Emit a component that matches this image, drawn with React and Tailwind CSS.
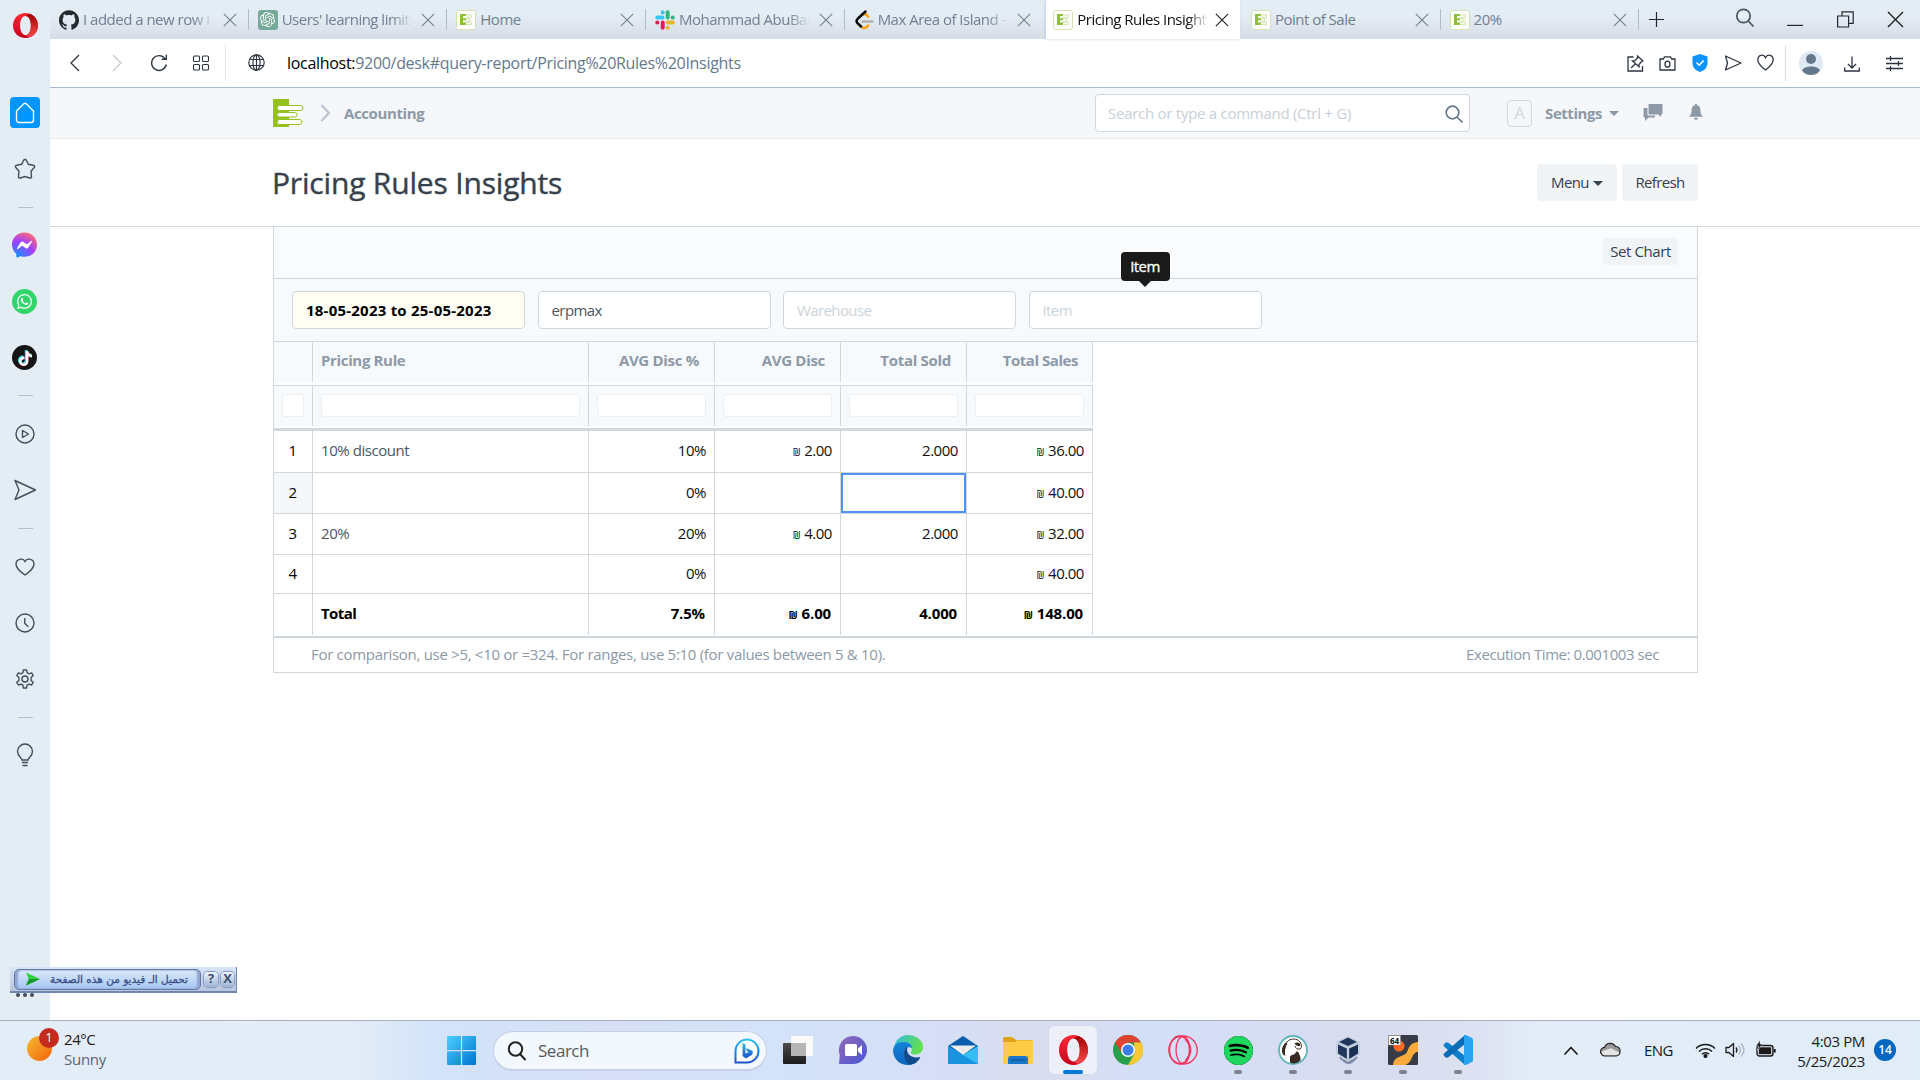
import React from "react";
import { SiGithub, SiOpenai, SiTiktok, SiWhatsapp, SiSpotify } from "react-icons/si";

const Svg = ({ w = 20, h = w, vb = "0 0 20 20", className = "", sw = 1.3, children }) => (
  <svg width={w} height={h} viewBox={vb} className={`shrink-0 ${className}`} fill="none" stroke="currentColor" strokeWidth={sw}>
    {children}
  </svg>
);

const OperaO = ({ w, h }) => (
  <svg width={w} height={h} viewBox="0 0 30 30" preserveAspectRatio="none" className="shrink-0">
    <defs>
      <linearGradient id="opA" x1="0" y1="0" x2="0" y2="1">
        <stop offset="0" stopColor="#ff2a3a" />
        <stop offset="1" stopColor="#c8001c" />
      </linearGradient>
      <linearGradient id="opB" x1="0" y1="0" x2="0" y2="1">
        <stop offset="0" stopColor="#9c0000" />
        <stop offset="1" stopColor="#ff4b4b" />
      </linearGradient>
    </defs>
    <path fillRule="evenodd" fill="url(#opA)" d="M15 0C6.500 0 0 6.500 0 15s6.500 15 15 15c8.500 0 15-6.500 15-15S23.500 0 15 0zM15 3.500c4 0 6.500 5 6.500 11.500S19 26.500 15 26.500 8.500 21.500 8.500 15 11 3.500 15 3.500z" />
    <path fill="url(#opB)" d="M15 3.500C17 1.800 19 1.200 20.500 1.200 26 3.500 30 8.500 30 15s-4 11.500-9.500 13.800C18.500 28.800 17 28.200 15 26.500c4 0 6.500-5 6.500-11.500S19 3.500 15 3.500z" />
  </svg>
);

const ErpFavicon = () => (
  <svg width="20" height="20" viewBox="0 0 20 20" className="shrink-0">
    <rect x=".5" y=".5" width="19" height="19" rx="2" fill="#fdfefb" stroke="#d4e3b5" />
    <path d="M4 4h6v2H7v2.300h3v2H7v2.300h3V15H4z" fill="#8fbe3c" />
    <path d="M9.500 5h6v2.400h-6M9.500 8.600h4.500v2.400H9.500M9.500 12.300h6v2.200h-6" fill="none" stroke="#cfe2a8" strokeWidth=".9" />
  </svg>
);

const ErpLogo = () => (
  <svg width="31" height="28" viewBox="0 0 31 28" className="shrink-0">
    <rect width="16" height="28" fill="#95c11f" />
    <g fill="#fff" stroke="#95c11f" strokeWidth="1">
      <rect x="4" y="6.500" width="26" height="5" rx="2.500" />
      <rect x="4" y="13.500" width="20" height="4.500" rx="2.200" />
      <rect x="4" y="20.500" width="25" height="5" rx="2.500" />
    </g>
  </svg>
);

const Slack = () => (
  <svg width="20" height="20" viewBox="0 0 20 20" className="shrink-0" strokeWidth="4" strokeLinecap="round">
    <path d="M7.700 2.200v.2M2.300 7.600h5.200" stroke="#36c5f0" />
    <path d="M12.700 2.300v5.200M17.800 7.600h-.1" stroke="#2eb67d" />
    <path d="M7.700 17.700v-5.200M2.200 12.600h.1" stroke="#e01e5a" />
    <path d="M12.700 17.800v-.1M12.700 12.600h5.100" stroke="#ecb22e" />
  </svg>
);

const Leet = () => (
  <svg width="20" height="20" viewBox="0 0 20 20" className="shrink-0" fill="none" strokeLinecap="round" strokeWidth="2.500">
    <path d="M7.500 5.200c2-1.500 4-1.300 5.500 0l1.300 1.500M7 16.500c1.700 2 4.200 2 5.700.5l1.500-1.500" stroke="#ffa116" />
    <path d="M11.500 1.500 3.500 9c-1.200 1.300-1.200 2.800 0 4.200L7 16.500" stroke="#070706" />
    <path d="M8.500 11.500h9.700" stroke="#b3b3b3" />
  </svg>
);

const Cross = ({ dark, s = 14 }) => (
  <Svg w={s} vb="0 0 14 14" sw={1.1} className={dark ? "text-[#1b1f24]" : "text-[#75808b]"}>
    <path d="M.8.8l12.400 12.400M13.200.8.8 13.200" />
  </Svg>
);

const tabs = [
  { icon: <SiGithub size={20} color="#24292f" />, t: "I added a new row i" },
  { icon: <div className="flex size-5 items-center justify-center rounded-[3px] bg-[#75a99a]"><SiOpenai size={15} color="#fff" /></div>, t: "Users' learning limit" },
  { icon: <ErpFavicon />, t: "Home" },
  { icon: <Slack />, t: "Mohammad AbuBac" },
  { icon: <Leet />, t: "Max Area of Island -" },
  { icon: <ErpFavicon />, t: "Pricing Rules Insight", active: true },
  { icon: <ErpFavicon />, t: "Point of Sale" },
  { icon: <ErpFavicon />, t: "20%" },
];

function TabBar() {
  return (
    <div className="flex h-[39px] items-stretch bg-gradient-to-b from-[#e4ecf4] from-40% to-[#d6dde6]">
      {tabs.map((x, i) => {
        const line = !x.active && i !== 4;
        return (
          <div
            key={i}
            className={`relative flex w-[198.670px] shrink-0 items-center ${x.active ? "" : "pr-[12px] pl-[9px]"}`}
          >
            <div className={x.active ? "ml-[3px] flex h-full w-[194px] items-center rounded-t-[2px] bg-white pr-[11px] pl-[7px] shadow-[-1px_0_3px_#c0cee4]" : "contents"}>
              {x.icon}
              <div
                className={`mb-[2px] ml-[4px] w-[131px] text-[15px] leading-[22px] tracking-[-0.034em] whitespace-nowrap ${i === 2 || i > 5 ? "" : "[mask-image:linear-gradient(to_right,#000_84%,transparent)]"} ${x.active ? "text-[#111]" : "text-[#6f8093]"}`}
              >
                {x.t}
              </div>
              <div className="ml-auto flex"><Cross dark={x.active} /></div>
            </div>
            {line && <div className="absolute top-[9px] right-0 h-[21px] w-px bg-[#aebccb]" />}
          </div>
        );
      })}
      <div className="flex flex-1 items-center pb-px pl-[10px] text-[#22282f]">
        <Svg w={15} vb="0 0 15 15" sw={1.2}><path d="M7.500 0v15M0 7.500h15" /></Svg>
        <Svg w={20} sw={1.700} className="mt-[-3px] ml-[71px] text-[#4a545f]"><circle cx="8.500" cy="8" r="6.700" /><path d="M13.300 13l5.200 5.500" /></Svg>
        <Svg w={16} h={14} vb="0 0 16 14" sw={1.200} className="ml-[32px]"><path d="M0 13.400h16" /></Svg>
        <Svg w={17} vb="0 0 17 17" sw={1.200} className="ml-[34px]"><path d="M.6 5h11v11H.6zM5 5V.8h11.200v11.500h-4.500" /></Svg>
        <div className="ml-[33px] flex"><Cross dark s={17} /></div>
      </div>
    </div>
  );
}

function AddressBar() {
  return (
    <div className="flex h-[49px] items-center border-b border-[#a9b8ca] bg-white text-[#2c3540]">
      <Svg w={12} h={18} vb="0 0 12 18" className="ml-[19px]"><path d="M10 1 2 9l8 8" /></Svg>
      <Svg w={12} h={18} vb="0 0 12 18" className="ml-[30px] text-[#c3c9d0]"><path d="M2 1l8 8-8 8" /></Svg>
      <Svg w={18} vb="0 0 18 18" className="ml-[27px]" sw={1.400}><path d="M16.300 10.500A7.400 7.400 0 1 1 15 4.600M16.300.8v4.500h-4.600" /></Svg>
      <Svg w={18} vb="0 0 18 18" className="ml-[24px]" sw={1.100}>
        <rect x="1.500" y="2" width="6" height="5.500" rx="1" /><rect x="10.500" y="2" width="6" height="5.500" rx="1" />
        <rect x="1.500" y="10.500" width="6" height="5.500" rx="1" /><rect x="10.500" y="10.500" width="6" height="5.500" rx="1" />
      </Svg>
      <div className="ml-[15px] h-9 w-px bg-[#e3e6ea]" />
      <Svg w={17} vb="0 0 17 17" className="ml-[22px] mb-px" sw={1.200}>
        <circle cx="8.500" cy="8.500" r="7.700" /><ellipse cx="8.500" cy="8.500" rx="3.600" ry="7.700" /><path d="M8.500.8v15.400M1.500 5.500h14M1.500 11.500h14" />
      </Svg>
      <div className="ml-[22px] flex-1 text-[16px] tracking-[-0.019em] text-[#66788c]">
        <span className="text-black">localhost:</span>9200/desk#query-report/Pricing%20Rules%20Insights
      </div>
      <Svg w={17} vb="0 0 17 17"><path d="M6.500 2H1v14h14.500v-5M10.500 1l5.500 5-1.500.5-2.500 3 0 2.200L5.500 6l2.500-.3 2.500-2.700zM8.500 8.700 4 13" /></Svg>
      <Svg w={17} vb="0 0 17 17" className="ml-[15px]"><path d="M1 4h3.500l1-2.200h6l1 2.200H16v11H1z" strokeLinejoin="round" /><ellipse cx="8.500" cy="9.200" rx="2.500" ry="3" /></Svg>
      <svg width="16" height="18" viewBox="0 0 16 18" className="ml-[16px] shrink-0"><path d="M8 0l7.500 2.500V9c0 4.500-3 7.500-7.500 9C3.500 16.500.5 13.500.5 9V2.500z" fill="#0a93ff" /><path d="M4.500 8.500l2.700 2.700 4.500-4.700" fill="none" stroke="#fff" strokeWidth="1.600" /></svg>
      <Svg w={18} vb="0 0 18 18" className="ml-[16px]"><path d="M1.500 2 17 9 1.500 16l2-7z" strokeLinejoin="round" /></Svg>
      <Svg w={17} vb="0 0 17 17" className="mt-[-2px] ml-[15px]"><path d="M8.500 16C4 12.500.8 9.800.8 5.700c0-5 6-6 7.700-2 1.700-4 7.700-3 7.700 2C16.200 9.800 13 12.500 8.500 16z" /></Svg>
      <div className="ml-[11px] h-9 w-px bg-[#d9dee4]" />
      <svg width="24" height="24" viewBox="0 0 24 24" className="ml-[13px] shrink-0"><circle cx="12" cy="12" r="12" fill="#dfe9f3" /><circle cx="12" cy="8" r="5" fill="#65788b" /><path d="M3 19.500C5 14 19 14 21 19.500 17 25.500 7 25.500 3 19.500z" fill="#65788b" /></svg>
      <Svg w={16} vb="0 0 16 16" className="mt-[2px] ml-[21px]" sw={1.300}><path d="M8 .5v11M4 8l4 4 4-4M.7 11.500V15h14.600v-3.500" /></Svg>
      <Svg w={17} vb="0 0 17 17" className="mr-[17px] ml-[26px]" sw={1.300}><path d="M0 3.500h17M0 8.500h17M0 13.500h17M4.500 1v5M12.500 6v5M4.500 11v5" /></Svg>
    </div>
  );
}

function NavBar() {
  return (
    <div className="flex h-[51px] items-center border-b border-[#e8ecf0] bg-[#f5f7fa] pl-[223px] text-[#8d99a6]">
      <ErpLogo />
      <Svg w={11} h={18} vb="0 0 11 18" sw={2.200} className="ml-[16px] text-[#b9c4d0]"><path d="M1.500 1 9 9l-7.500 8" /></Svg>
      <div className="ml-[13px] text-[15px] font-bold tracking-[-0.026em]">Accounting</div>
      <div className="ml-auto flex h-[38px] w-[375px] items-center rounded-[4px] border border-[#d1d8dd] bg-white pr-[6px] pl-[12px] text-[15px] tracking-[-0.018em] text-[#c8d0d8]">
        <span className="flex-1">Search or type a command (Ctrl + G)</span>
        <Svg w={18} vb="0 0 18 18" sw={1.700} className="mt-px text-[#66788a]"><circle cx="7.500" cy="7.500" r="6.300" /><path d="M12 12l5.500 5.500" /></Svg>
      </div>
      <div className="ml-[37px] flex h-[27px] w-[25px] items-center justify-center rounded-[4px] border border-[#d1d8dd] text-[17px] text-[#d1d8dd]">A</div>
      <div className="ml-[13px] text-[15px] font-bold tracking-[-0.030em]">Settings</div>
      <div className="ml-[7px] border-x-[5px] border-t-[5px] border-x-transparent border-t-[#8d99a6]" />
      <svg width="20" height="17" viewBox="0 0 20 17" className="mt-[-2px] ml-[24px] shrink-0" fill="#8d99a6"><path d="M6.500 0h12c.6 0 1 .4 1 1v8.500c0 .6-.4 1-1 1H18V13l-2.800-2.500H6.500c-.6 0-1-.4-1-1V1c0-.6.400-1 1-1z" /><path d="M4.500 4H1.500c-.6 0-1 .4-1 1v7.500c0 .6.400 1 1 1H2V17l3.500-3.500H11c.6 0 1-.4 1-1V11.500H5.500a1 1 0 0 1-1-1z" /></svg>
      <svg width="14" height="16" viewBox="0 0 14 16" className="mt-[-2px] mr-[217px] ml-[26px] shrink-0" fill="#8d99a6"><path d="M7 0c.7 0 1.100.5 1.100 1.200C10.500 1.700 11.500 3.800 11.500 6.500c0 3 .8 4.500 2.500 6.200H0c1.700-1.700 2.500-3.200 2.500-6.200 0-2.700 1-4.800 3.400-5.300C5.900.5 6.300 0 7 0zM5 13.700h4c0 1.200-.9 2.100-2 2.100s-2-.9-2-2.100z" /></svg>
    </div>
  );
}

const colW = ["w-[39px]", "w-[276px]", "w-[126px]", "w-[126px]", "w-[126px]", "w-[126px]"];
const headers = ["", "Pricing Rule", "AVG Disc %", "AVG Disc", "Total Sold", "Total Sales"];
const rows = [
  { h: "h-[41px]", c: ["1", "10% discount", "10%", "₪ 2.00", "2.000", "₪ 36.00"] },
  { h: "h-[40px]", c: ["2", "", "0%", "", "", "₪ 40.00"] },
  { h: "h-[40px]", c: ["3", "20%", "20%", "₪ 4.00", "2.000", "₪ 32.00"] },
  { h: "h-[38px]", c: ["4", "", "0%", "", "", "₪ 40.00"] },
];

const Amount = ({ v }) =>
  v.startsWith("₪") ? (
    <span className="flex items-baseline gap-[4px]"><span className="text-[10px] leading-none">₪</span>{v.slice(2)}</span>
  ) : (
    v
  );

function Filter({ children, className }) {
  return <div className={`flex h-[38px] w-[233px] items-center rounded-[4px] border border-[#d1d8dd] pl-[13px] text-[15px] ${className}`}>{children}</div>;
}

function Report() {
  return (
    <div className="ml-[223px] w-[1425px] border-x border-b border-[#d1d8dd] text-[15px]">
      <div className="flex h-[52px] justify-end border-b border-[#d1d8dd] bg-[#fafbfc] pt-[11px] pr-[19px]">
        <div className="flex h-[27px] w-[75px] items-center justify-center rounded-[3px] bg-[#f0f4f7] tracking-[-0.027em] text-[#36414c]">Set Chart</div>
      </div>
      <div className="flex h-[63px] gap-[12.500px] border-b border-[#d1d8dd] bg-[#f7fafc] pt-[12px] pl-[18px]">
        <Filter className="bg-[#fffdf4] font-bold tracking-[0.015em] text-black">18-05-2023 to 25-05-2023</Filter>
        <Filter className="bg-white tracking-[-0.038em] text-[#4c5661]">erpmax</Filter>
        <Filter className="bg-white tracking-[-0.040em] text-[#ccd4da]">Warehouse</Filter>
        <div className="relative">
          <Filter className="bg-white tracking-[-0.040em] text-[#ccd4da]">Item</Filter>
          <div className="absolute top-[-39px] left-[92px] flex h-[29px] w-[49px] items-center justify-center rounded-[4px] bg-[#1a1a1a] font-medium tracking-[-0.040em] text-white [-webkit-text-stroke:0.3px_white]">
            Item
            <div className="absolute top-full border-x-[6px] border-t-[6px] border-x-transparent border-t-[#1a1a1a]" />
          </div>
        </div>
      </div>

      <div className="w-[819px]">
        <div className="mb-[3px] flex h-[40px] bg-[#f7fafc] font-bold text-[#8d99a6]">
          {headers.map((x, i) => (
            <div key={i} className={`${colW[i]} border-r border-[#d1d8dd] pt-[7px] leading-[22px] ${i > 1 ? "text-right" : "pl-[8px] tracking-[-0.023em]"} ${i === 5 ? "pr-[14px] tracking-[-0.030em]" : i > 1 ? "pr-[15px] tracking-[-0.020em]" : ""}`}>{x}</div>
          ))}
        </div>
        <div className="mb-[2px] flex h-[41px] border-t border-[#d1d8dd] bg-[#f7fafc]">
          {headers.map((x, i) => (
            <div key={i} className={`${colW[i]} border-r border-[#d1d8dd] px-[8px] pt-[8px]`}>
              <div className="h-[23px] rounded-[3px] border border-[#ebeff2] bg-white" />
            </div>
          ))}
        </div>
        <div className="h-[3px] bg-[#d1d8dd]" />
        {rows.map((r, k) => (
          <div key={k} className={`flex ${r.h} ${k === 0 ? "" : "mt-px"} shadow-[0_1px_0_#d1d8dd]`}>
            {r.c.map((x, i) => (
              <div
                key={i}
                className={`${colW[i]} relative flex items-center border-r border-[#d1d8dd] pb-[2px] tracking-[-0.030em] ${
                  i === 0 ? `justify-center pr-px text-black ${k === 1 ? "bg-[#f5f7fa]" : ""}` : i === 1 ? "pl-[8px] text-[#4c5661]" : "justify-end pr-[8px] text-[#111]"
                }`}
              >
                <Amount v={x} />
                {k === 1 && i === 4 && <div className="absolute inset-0 border-2 border-[#5292f7]" />}
              </div>
            ))}
          </div>
        ))}
        <div className="mt-px mb-px flex h-[41px] font-bold text-black">
          {["", "Total", "7.5%", "₪ 6.00", "4.000", "₪ 148.00"].map((x, i) => (
            <div key={i} className={`${colW[i]} flex items-center border-r border-[#d1d8dd] pb-[2px] ${i > 1 ? "justify-end pr-[9px] tracking-[-0.010em]" : "pl-[8px] tracking-[-0.040em]"}`}>
              <Amount v={x} />
            </div>
          ))}
        </div>
      </div>
      <div className="flex h-[36px] items-center justify-between border-t-2 border-[#d1d8dd] pr-[38px] pb-px pl-[37px] text-[#8d99a6]">
        <span className="tracking-[-0.020em]">For comparison, use &gt;5, &lt;10 or =324. For ranges, use 5:10 (for values between 5 &amp; 10).</span>
        <span className="tracking-[-0.029em]">Execution Time: 0.001003 sec</span>
      </div>
    </div>
  );
}

const Rule = ({ className }) => <div className={`h-px w-[15px] bg-[#b3c2d1] ${className}`} />;

function Sidebar() {
  return (
    <div className="flex w-[50px] flex-col items-center bg-[#e4ecf4] pr-px text-[#434e5a]">
      <div className="mt-[13px] ml-px flex"><OperaO w={25} h={25} /></div>
      <div className="mt-[59px] ml-px flex h-[31px] w-[30px] items-center justify-center rounded-[4px] bg-[#0096ff] text-white">
        <Svg w={20} h={22} vb="0 0 20 22" sw={1.400}><path d="M1.500 9 8.500 2q1.500-1.400 3 0l7 7v9a2.500 2.500 0 0 1-2.500 2.500H4A2.500 2.500 0 0 1 1.500 18z" /></Svg>
      </div>
      <Svg w={22} vb="0 0 22 22" className="mt-[30px]" sw={1.400}><path d="M11 1.500c.8 0 1.200.4 1.500 1l1.900 3.800 5 1c1.300.2 1.500 1.400.8 2.200L17 13.200l.5 5.300c.1 1.300-.8 1.800-1.700 1.500L11 18.500 6.200 20c-.9.300-1.800-.2-1.700-1.500l.5-5.300-3.200-3.700c-.7-.8-.5-2 .8-2.200l5-1 1.900-3.800c.3-.6.700-1 1.500-1z" /></Svg>
      <Rule className="mt-[27px] ml-px" />
      <svg width="25" height="26" viewBox="0 0 24 24" className="mt-[24px] shrink-0">
        <defs><radialGradient id="msg" cx=".2" cy="1" r="1.100"><stop offset="0" stopColor="#0a95ff" /><stop offset=".6" stopColor="#a040ff" /><stop offset="1" stopColor="#ff6a70" /></radialGradient></defs>
        <path fill="url(#msg)" d="M12 0C5.200 0 0 5 0 11.600c0 3.500 1.400 6.500 3.800 8.600.2.200.3.400.3.700L4.200 23c0 .7.700 1.100 1.300.9l2.400-1.100c.2-.1.400-.1.600 0 1.100.3 2.300.5 3.500.5 6.800 0 12-5 12-11.600S18.800 0 12 0z" />
        <path fill="#fff" d="M4.800 15l3.500-5.600c.6-.9 1.800-1.100 2.600-.5l2.800 2.100c.3.200.6.200.9 0l3.800-2.900c.5-.4 1.200.2.800.8l-3.500 5.600c-.6.900-1.800 1.100-2.600.5L10.300 13c-.3-.2-.6-.2-.9 0l-3.800 2.800c-.5.300-1.200-.3-.8-.8z" />
      </svg>
      <div className="mt-[31px] flex size-[25px] shrink-0 items-center justify-center rounded-full bg-[#32d56b]"><SiWhatsapp size={15} color="#fff" /></div>
      <div className="relative mt-[31px] flex size-[25px] shrink-0 items-center justify-center rounded-full bg-[#151515]">
        <SiTiktok size={15} color="#25f4ee" />
        <SiTiktok size={15} color="#fe2c55" className="absolute top-[6px] left-[6px]" />
        <SiTiktok size={15} color="#fff" className="absolute top-[5.500px] left-[5.500px]" />
      </div>
      <Rule className="mt-[25px] ml-px" />
      <Svg w={20} vb="0 0 20 20" className="mt-[28px]" sw={1.400}><circle cx="10" cy="10" r="9" /><path d="M7.500 6.500l6 3.500-6 3.500z" strokeLinejoin="round" /></Svg>
      <Svg w={22} vb="0 0 22 22" className="mt-[35px]" sw={1.400}><path d="M1 1.500 21.500 11 1 20.500 5 11z" strokeLinejoin="round" /></Svg>
      <Rule className="mt-[27px] ml-px" />
      <Svg w={20} vb="0 0 20 20" className="mt-[28px]" sw={1.400}><path d="M10 18C5 14.500 1 11.500 1 7c0-5 7-6.500 9-2.500C12 .5 19 2 19 7c0 4.500-4 7.500-9 11z" /></Svg>
      <Svg w={20} vb="0 0 20 20" className="mt-[36px]" sw={1.400}><circle cx="10" cy="10" r="9" /><path d="M9.800 5v5.500l3.500 3.300" /></Svg>
      <Svg w={20} vb="0 0 20 20" className="mt-[36px]" sw={1.400}><path d="M8.500 1h3l.6 2.700 1.900 1.100 2.600-.9 1.600 2.700L16.100 8.500v2.900l2.100 1.900-1.600 2.700-2.600-.9-1.900 1.100-.6 2.800h-3l-.6-2.800L6 15.100l-2.600.9-1.600-2.700 2.100-1.900V8.500L1.800 6.600l1.600-2.700 2.600.9 1.900-1.100z" strokeLinejoin="round" /><circle cx="10" cy="10" r="3" /></Svg>
      <Rule className="mt-[28px] ml-px" />
      <Svg w={18} h={24} vb="0 0 18 24" className="mt-[25px] ml-px" sw={1.400}><path d="M6 17c0-2-4.500-4-4.500-8.500a7.500 7.500 0 0 1 15 0C16.500 13 12 15 12 17zM6 19.500h6M6.500 22.500h5" /></Svg>
      <div className="mt-[226px] ml-px flex gap-[3px]">{[0, 1, 2].map((i) => <div key={i} className="size-[4px] rounded-full bg-[#434e5a]" />)}</div>
    </div>
  );
}

const DownloadBar = () => (
  <div className="absolute top-[967px] left-[10px] flex h-[26px] w-[227px] items-center gap-[3px] border-r border-b-2 border-[#6f87b0] bg-gradient-to-b from-[#d8e4f8] to-[#b9c6de] pl-[4px]">
    <div className="flex h-[21px] w-[187px] items-center rounded-[5px] border border-[#6277a5] bg-gradient-to-b from-[#dce9fb] to-[#a4c6f2] pr-[12px] pl-[11px] shadow-[inset_3px_0_2px_#8fa6cf,inset_-3px_0_2px_#8fa6cf]">
      <svg width="14" height="14" viewBox="0 0 15 14" className="shrink-0"><path d="M0 0l15 7L0 14l3-7z" fill="#2fd13f" /><path d="M0 14l3-7h12z" fill="#139a28" /></svg>
      <span dir="rtl" className="ml-auto text-right font-['DejaVu_Sans',sans-serif] text-[10.500px] leading-[18px] tracking-[-0.010em] whitespace-nowrap text-[#3a4f86] [-webkit-text-stroke:0.3px_#3a4f86]">تحميل الـ فيديو من هذه الصفحة</span>
    </div>
    <div className="flex h-[15px] w-[14px] items-center justify-center rounded-[4px] bg-gradient-to-b from-[#eef4fd] to-[#9db3d3] text-[13px] font-bold text-[#3a5070] shadow-[0_0_1px_1px_#8298bd]">?</div>
    <div className="flex h-[15px] w-[13px] items-center justify-center rounded-[4px] bg-gradient-to-b from-[#eef4fd] to-[#9db3d3] text-[13px] font-bold text-[#3a5070] shadow-[0_0_1px_1px_#8298bd]">X</div>
  </div>
);

const App30 = ({ children, mark, active }) => (
  <div className={`flex h-[48px] w-[48px] shrink-0 flex-col items-center rounded-[5px] pt-[9px] ${active ? "bg-[#edf0f9] shadow-[0_0_1px_#b9c2d6]" : ""}`}>
    <div className="flex h-[30px] items-center">{children}</div>
    {active ? <div className="mt-[5px] h-[4px] w-5 rounded-full bg-[#0078d4]" /> : mark && <div className="mt-[5px] h-[4px] w-[8px] rounded-full bg-[#7c828f]" />}
  </div>
);

const G = ({ id, a, b, x2 = 0, y2 = 1 }) => (
  <linearGradient id={id} x1="0" y1="0" x2={x2} y2={y2}><stop offset="0" stopColor={a} /><stop offset="1" stopColor={b} /></linearGradient>
);
const Ic = ({ children, w = 30 }) => <svg width={w} height="30" viewBox="0 0 30 30" className="shrink-0">{children}</svg>;

function Taskbar() {
  return (
    <div className="flex h-[60px] items-start border-t border-[#a9b1bd] bg-[linear-gradient(90deg,#e2edf8_0%,#e4edf7_18%,#d3e3fa_23%,#d6dff5_32%,#d3e3f9_40%,#d6def5_50%,#d9dcee_54%,#d3dff8_60%,#d9dcee_72%,#dde2f2_77%,#e2edf8_80%,#e0ecf8_100%)] pt-[5px] text-[15px]">
      <div className="relative mt-[10px] ml-[27px] size-[25px] rounded-full bg-gradient-to-br from-[#f2b92e] to-[#f2610c]">
        <div className="absolute top-[-8px] left-[12px] flex size-[20px] items-center justify-center rounded-full bg-[#c42b1c] text-[13px] text-white">1</div>
      </div>
      <div className="ml-[12px] w-[376px] pt-[3px] leading-[20px]">
        <div className="tracking-[-0.030em] text-[#1a1a1a]">24°C</div>
        <div className="tracking-[-0.018em] text-[#5c6470]">Sunny</div>
      </div>
      <svg width="29" height="29" viewBox="0 0 29 29" className="mt-[10px] ml-[7px] shrink-0"><defs><G id="win" a="#4cd0ff" b="#0072d0" x2={1} /></defs><path fill="url(#win)" d="M1 0h12.900v14H0V1q0-1 1-1zM15.100 0H28q1 0 1 1v13H15.100zM0 15.200h13.900V29H1q-1 0-1-1zM15.100 15.200H29V28q0 1-1 1H15.100z" /></svg>
      <div className="mt-[5px] ml-[17px] flex h-[40px] w-[274px] items-center rounded-full border border-b-2 border-[#c6d0e4] bg-[#f3f7fe] pr-[6px] pl-[13px]">
        <Svg w={20} sw={2} className="text-[#222]"><circle cx="8.500" cy="8" r="6.700" /><path d="M13 13l5 5.500" strokeLinecap="round" /></Svg>
        <span className="ml-[11px] flex-1 text-[17px] tracking-[-0.028em] text-[#555a60]">Search</span>
        <svg width="26" height="26" viewBox="0 0 26 26"><defs><G id="bing" a="#30c0f0" b="#1c53c8" /></defs><path d="M13 1.500A11.500 11.500 0 1 1 13 24.500H1.500V13A11.500 11.500 0 0 1 13 1.500z" fill="#fff" stroke="url(#bing)" strokeWidth="2" /><path d="M8.500 5l3 1.200v9.300l3-1.600-1.500-.8-1.200-3L18 12.500c1.200 1 1 3.200 0 4.200L12 20.500 8.500 18z" fill="url(#bing)" /></svg>
      </div>
      <div className="ml-[7px] flex gap-[7px]">
        <App30><Ic><defs><G id="tv" a="#4a4a4a" b="#1c1c1c" /></defs><rect y="8" width="23" height="21" rx="1" fill="url(#tv)" /><rect x="8" y="1" width="22" height="20" rx="1" fill="#fafafa" /><rect x="8" y="8" width="15" height="13" fill="#b5b5b5" /></Ic></App30>
        <App30><Ic><defs><G id="ch" a="#8f6bb5" b="#4b55d8" x2={1} /></defs><path d="M15 1a14 14 0 1 1 0 28H1l.8-9A14 14 0 0 1 15 1z" fill="url(#ch)" /><rect x="7" y="9" width="12" height="12" rx="1.500" fill="#fff" /><path d="M20 13.500l4-3.500v10l-4-3.500z" fill="#fff" /></Ic></App30>
        <App30><Ic><defs><G id="e1" a="#2fb9e8" b="#63e04e" x2={1} y2={0.3} /><G id="e2" a="#1484dc" b="#0b66bd" /></defs><path d="M1 13C2 5 8 0 15 0c8 0 15 5 15 12 0 5-4 7.500-8 7.500-3 0-5-1.500-4-2.500 2-2.500.5-7-5-7-5.500 0-9 4-12 3z" fill="url(#e1)" /><path d="M0 15C1 9 6 6.500 11 7c5 0 8 3 8 6-4-2-9 0-8 6 1 7 9 8 16 4-3 5-7 7-12 7C7 30 0 24 0 15z" fill="url(#e2)" /><path d="M11 17c0-3 2-5 3.500-5-2 6 3 12 13 10-3 5-7 7.500-11 7.500-3-2-6-6-5.500-12.500z" fill="#114a8b" /></Ic></App30>
        <App30><Ic><path d="M0 11 15 1l15 10v8H0z" fill="#0a5cad" /><path d="M2 10.500h26L15 20z" fill="#ececec" /><path d="M0 11l15 9L30 11v18H0z" fill="#1f9fe4" /><path d="M0 11l30 18H0z" fill="#1993dd" /><path d="M30 11v18L15 20z" fill="#38bdf2" /></Ic></App30>
        <App30><Ic><path d="M0 4q0-2 2-2h7l4 3h15q2 0 2 2v3H0z" fill="#e0a316" /><path d="M0 7h12l2-1.500h16V27q0 2-2 2H2q-2 0-2-2z" fill="#fdcb45" /><path d="M5 29v-5q0-3 3-3h14q3 0 3 3v5z" fill="#1a76c8" /><path d="M8 25h14" stroke="#0b529a" strokeWidth="1.200" /></Ic></App30>
        <App30 active><OperaO w={29} h={30} /></App30>
        <App30><Ic><circle cx="15" cy="15" r="15" fill="#2a9f4b" /><path d="M2 7.500A15 15 0 0 1 28 7.500H15L9 18z" fill="#df4432" /><path d="M28 7.500A15 15 0 0 1 15 30l6.500-11.500L21 7.500z" fill="#fcc934" /><path d="M2 7.500 8.500 18.700 15 22l-4 7.400C2 27-2 16 2 7.500z" fill="#2a9f4b" /><circle cx="15" cy="15" r="7" fill="#fff" /><circle cx="15" cy="15" r="5.500" fill="#3b7de9" /></Ic></App30>
        <App30><Ic><g fill="none" stroke="#f4355f" strokeWidth="1.300"><circle cx="15" cy="15" r="14.200" /><ellipse cx="11.500" cy="15" rx="10" ry="14" /><ellipse cx="15" cy="15" rx="7" ry="13.500" /><path d="M17.500 5c7 5 7 15 0 20" /></g></Ic></App30>
        <App30 mark><div className="rounded-full bg-black"><SiSpotify size={29} color="#1ed760" /></div></App30>
        <App30 mark><Ic><circle cx="15" cy="15" r="14" fill="#fff" stroke="#5fb5b8" strokeWidth="1.800" /><path d="M9 7c3-4 10-4 13 0 2 3 2 6 0 7-3 .5-4.500-1-5-3" fill="none" stroke="#382923" strokeWidth="1" /><path d="M16.500 8.500c1.500-1.500 4.500-1 5.500.5s.2 2.500-1.500 2.200-3-1.300-4-2.700zM8.500 7C5 9.500 3.500 13 4 17c.8 2.500 2 4 3.300 3.500C6.500 17 7 12 9.500 8zM12 21.500c2-2.500 4-1 5.500-3.500.5-1.500 2-2 3-.5 1 2.500 2.500 4.500 2 8C19 28.800 15 29 12 27.500z" fill="#382923" /></Ic></App30>
        <App30 mark><Ic><path d="M7 22c2 5 13 6 17 0M10 25c3 4 8 4 11 0" stroke="#7c8aa5" strokeWidth="2" fill="none" /><path d="M3 7 15 1l12 6v12l-12 8L3 19z" fill="#c3cee0" /><path d="M6 7l9-4.500L24 7l-9 4z" fill="#20375c" /><path d="M5 9.500l8.800 4v10.500L5 18.500z" fill="#20375c" /><path d="M25 9.500l-8.800 4v10.500l8.800-5.500z" fill="#183052" /></Ic></App30>
        <App30 mark><div className="relative flex"><Ic><rect width="30" height="30" rx="1.500" fill="#373b47" /><path d="M5 30c1-10 12-8 14-13s3-9 11-10v10c-7 0-5 11-13 13z" fill="#fbab3c" /><circle cx="11" cy="11" r="5.500" fill="#ff6a1f" /><rect x=".5" y=".5" width="12" height="9.500" fill="#fff" stroke="#888" strokeWidth=".5" /></Ic><span className="absolute top-0 left-[2px] text-[8px] leading-[11px] font-bold text-black">64</span></div></App30>
        <App30 mark><Ic><path d="M22 0v30L1 11.500q-1-1.500 0-2.500l2-1.500q1-.5 2 0L22 21z" fill="#0f7fc9" /><path d="M22 0 1 18.500q-1 1.500 0 2.500l2 1.500q1 .5 2 0L22 9z" fill="#0a6cb5" /><path d="M21 0q1-.3 2 0l6 3q1 .5 1 1.500v21q0 1-1 1.500l-6 3q-1 .3-2 0z" fill="#27a3f0" /></Ic></App30>
      </div>
      <div className="ml-auto flex h-[48px] items-center text-[#1a1a1a]">
        <Svg w={14} h={9} vb="0 0 14 9" sw={1.700}><path d="M1 8l6-6.500L13 8" strokeLinecap="round" strokeLinejoin="round" /></Svg>
        <svg width="21" height="15" viewBox="0 0 21 15" className="mb-px ml-[22px] shrink-0"><path d="M5 13.800a4.200 4.200 0 0 1-.5-8.400A6 6 0 0 1 15.500 4.500a4.700 4.700 0 0 1 .8 9.300z" fill="#9a9a9a" stroke="#222" strokeWidth="1.200" /><path d="M5 13.200c-2.500 0-3.800-2-3-4L11 6.300l8.200 4.200c-.4 1.800-1.500 2.700-3 2.700z" fill="#e4e4e4" /></svg>
        <span className="ml-[23px] w-[29px] tracking-[-0.040em]">ENG</span>
        <Svg w={21} h={16} vb="0 0 21 16" sw={1.500} className="mb-px ml-[22px]"><path d="M1 6.500a13.500 13.500 0 0 1 19 0M4 9.500a9.300 9.300 0 0 1 13 0M7 12.300a5 5 0 0 1 7 0" /><circle cx="10.500" cy="14" r="1.300" fill="currentColor" /></Svg>
        <Svg w={21} h={16} vb="0 0 21 16" sw={1.300} className="mb-px ml-[9px]"><path d="M1 5.500h3l4.500-4v13L4 10.500H1z" strokeLinejoin="round" /><path d="M11 5.500q2 2.500 0 5" /><path d="M13.500 3.500q4 4.500 0 9M16 1.500q6 6.500 0 13" stroke="#a9b4c2" /></Svg>
        <Svg w={20} h={17} vb="0 -1 20 17" sw={1.400} className="mb-[3px] ml-[10px]"><rect x="1" y="4.500" width="16" height="10.500" rx="2.500" /><rect x="3.500" y="7" width="11" height="5.500" fill="currentColor" /><path d="M18.700 8v3.500" strokeWidth="2" /><path d="M4-.8 0 5h2.500l-1 4.500L6.500 3H4z" fill="currentColor" stroke="#e2edf8" strokeWidth=".5" /></Svg>
        <div className="mt-px ml-[19px] w-[70px] text-right leading-[20px] tracking-[-0.025em]">4:03 PM<br />5/25/2023</div>
        <div className="mr-[24px] ml-[9px] flex size-[22px] items-center justify-center rounded-full bg-[#0067c0] text-[12px] font-semibold text-white">14</div>
      </div>
    </div>
  );
}

export default function App() {
  return (
    <div className="relative flex h-[1080px] w-[1920px] flex-col overflow-hidden bg-white font-['Open_Sans','Noto_Sans',sans-serif]">
      <div className="flex h-[1020px]">
        <Sidebar />
        <div className="flex w-[1870px] flex-col">
          <TabBar />
          <AddressBar />
          <NavBar />
          <div className="flex h-[88px] items-center border-b border-[#d1d8dd] pr-[222px] pl-[222px] text-[15px] text-[#36414c]">
            <h1 className="flex-1 text-[30px] font-medium tracking-[-0.006em] [-webkit-text-stroke:0.4px_#36414c]">Pricing Rules Insights</h1>
            <div className="mb-px flex h-[37px] w-[80px] items-center justify-center gap-[4px] rounded-[4px] bg-[#f0f4f7] tracking-[-0.038em]">
              Menu
              <span className="mt-[3px] border-x-[5px] border-t-[5px] border-x-transparent border-t-[#36414c]" />
            </div>
            <div className="mb-px ml-[5px] flex h-[37px] w-[76px] items-center justify-center rounded-[4px] bg-[#f0f4f7] tracking-[-0.044em]">Refresh</div>
          </div>
          <Report />
        </div>
      </div>
      <Taskbar />
      <DownloadBar />
    </div>
  );
}
